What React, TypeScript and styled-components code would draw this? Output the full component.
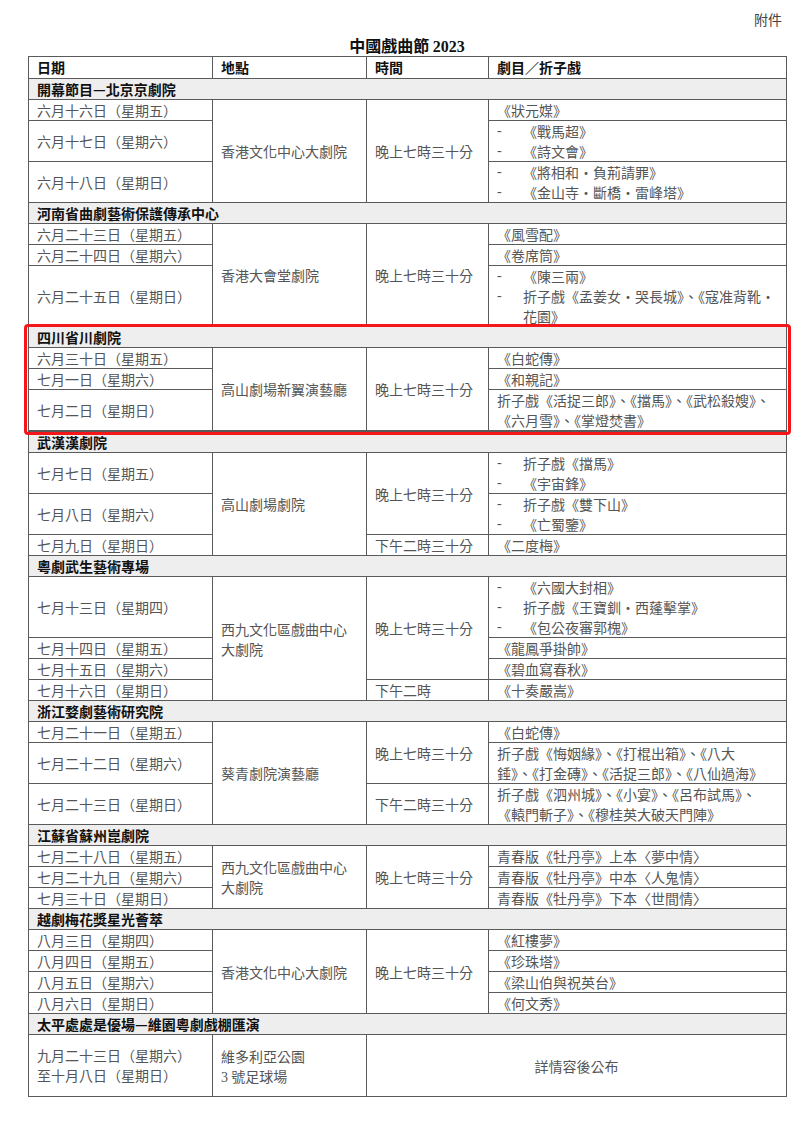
import { ReactNode } from 'react';
import styled, { createGlobalStyle, css } from 'styled-components';

const GlobalStyle = createGlobalStyle`
  html, body {
    margin: 0;
    padding: 0;
    background: #ffffff;
  }
  body {
    font-family: "Noto Sans CJK TC", "Noto Sans", sans-serif;
  }
`;

const Page = styled.div`
  width: 800px;
  min-height: 1132px;
  box-sizing: border-box;
  padding: 9px 14px 0 28px;
  background: #ffffff;
`;

const Attachment = styled.div`
  height: 20px;
  text-align: right;
  margin-right: 4px;
  font-size: 14px;
  line-height: 20px;
  color: #444444;
`;

const Title = styled.div`
  width: 758px;
  height: 20px;
  margin: 6px 0 1px;
  text-align: center;
  font-size: 16px;
  line-height: 20px;
  font-weight: 700;
  color: #111111;
`;

const Latin = styled.span`
  font-family: "Liberation Serif", "Noto Sans CJK TC", serif;
  line-height: 0;
`;

const Table = styled.table`
  width: 758px;
  border-collapse: collapse;
  table-layout: fixed;
  font-size: 14px;
  line-height: 20px;
  color: #555555;
`;

const Col = styled.col<{ $w: number }>`
  width: ${(p) => p.$w}px;
`;

const Group = styled.tbody<{ $highlight?: boolean }>`
  ${(p) =>
    p.$highlight &&
    css`
      position: relative;
      &::after {
        content: '';
        position: absolute;
        top: -3px;
        bottom: -3px;
        left: -5px;
        right: -4px;
        border: 3px solid #f5161a;
        border-radius: 4px;
        pointer-events: none;
      }
    `}
`;

const borderLine = css`
  border: 1px solid #5a5a5a;
  padding: 0 8px;
`;

const HeadCell = styled.th`
  ${borderLine};
  text-align: left;
  font-weight: 700;
  line-height: 21px;
  color: #111111;
`;

const SectionCell = styled.td`
  ${borderLine};
  background: #eeeeee;
  font-weight: 700;
  color: #111111;
`;

const Cell = styled.td<{ $center?: boolean; $tall?: boolean }>`
  ${borderLine};
  vertical-align: middle;
  text-align: ${(p) => (p.$center ? 'center' : 'left')};
  ${(p) =>
    p.$tall &&
    css`
      padding-top: 10px;
      padding-bottom: 11px;
    `}
`;

const Line = styled.div`
  height: 20px;
  white-space: nowrap;
`;

const DashItem = styled.div`
  display: flex;
`;

const Dash = styled.span`
  flex: none;
  width: 26px;
  height: 20px;
  font-family: "Liberation Serif", serif;
`;

type Span = { text: ReactNode; rows: number };

interface Row {
  date: ReactNode;
  venue?: Span;
  time?: Span;
  play: ReactNode;
  wide?: boolean;
}

interface Section {
  title: string;
  rows: Row[];
  highlight?: boolean;
}

const Dashes = ({ items }: { items: ReactNode[] }) => (
  <>
    {items.map((item, i) => (
      <DashItem key={i}>
        <Dash>-</Dash>
        <div>{item}</div>
      </DashItem>
    ))}
  </>
);

const Lines = ({ items }: { items: ReactNode[] }) => (
  <>
    {items.map((item, i) => (
      <Line key={i}>{item}</Line>
    ))}
  </>
);

const EVENING = '晚上七時三十分';

const sections: Section[] = [
  {
    title: '開幕節目—北京京劇院',
    rows: [
      {
        date: '六月十六日（星期五）',
        venue: { text: '香港文化中心大劇院', rows: 3 },
        time: { text: EVENING, rows: 3 },
        play: '《狀元媒》',
      },
      { date: '六月十七日（星期六）', play: <Dashes items={['《戰馬超》', '《詩文會》']} /> },
      {
        date: '六月十八日（星期日）',
        play: <Dashes items={['《將相和・負荊請罪》', '《金山寺・斷橋・雷峰塔》']} />,
      },
    ],
  },
  {
    title: '河南省曲劇藝術保護傳承中心',
    rows: [
      {
        date: '六月二十三日（星期五）',
        venue: { text: '香港大會堂劇院', rows: 3 },
        time: { text: EVENING, rows: 3 },
        play: '《風雪配》',
      },
      { date: '六月二十四日（星期六）', play: '《卷席筒》' },
      {
        date: '六月二十五日（星期日）',
        play: (
          <Dashes
            items={[
              '《陳三兩》',
              <Lines key="l" items={['折子戲《孟姜女・哭長城》、《寇准背靴・', '花園》']} />,
            ]}
          />
        ),
      },
    ],
  },
  {
    title: '四川省川劇院',
    highlight: true,
    rows: [
      {
        date: '六月三十日（星期五）',
        venue: { text: '高山劇場新翼演藝廳', rows: 3 },
        time: { text: EVENING, rows: 3 },
        play: '《白蛇傳》',
      },
      { date: '七月一日（星期六）', play: '《和親記》' },
      {
        date: '七月二日（星期日）',
        play: <Lines items={['折子戲《活捉三郎》、《擋馬》、《武松殺嫂》、', '《六月雪》、《掌燈焚書》']} />,
      },
    ],
  },
  {
    title: '武漢漢劇院',
    rows: [
      {
        date: '七月七日（星期五）',
        venue: { text: '高山劇場劇院', rows: 3 },
        time: { text: EVENING, rows: 2 },
        play: <Dashes items={['折子戲《擋馬》', '《宇宙鋒》']} />,
      },
      { date: '七月八日（星期六）', play: <Dashes items={['折子戲《雙下山》', '《亡蜀鑒》']} /> },
      {
        date: '七月九日（星期日）',
        time: { text: '下午二時三十分', rows: 1 },
        play: '《二度梅》',
      },
    ],
  },
  {
    title: '粵劇武生藝術專場',
    rows: [
      {
        date: '七月十三日（星期四）',
        venue: { text: '西九文化區戲曲中心大劇院', rows: 4 },
        time: { text: EVENING, rows: 3 },
        play: <Dashes items={['《六國大封相》', '折子戲《王寶釧・西蓬擊掌》', '《包公夜審郭槐》']} />,
      },
      { date: '七月十四日（星期五）', play: '《龍鳳爭掛帥》' },
      { date: '七月十五日（星期六）', play: '《碧血寫春秋》' },
      {
        date: '七月十六日（星期日）',
        time: { text: '下午二時', rows: 1 },
        play: '《十奏嚴嵩》',
      },
    ],
  },
  {
    title: '浙江婺劇藝術研究院',
    rows: [
      {
        date: '七月二十一日（星期五）',
        venue: { text: '葵青劇院演藝廳', rows: 3 },
        time: { text: EVENING, rows: 2 },
        play: '《白蛇傳》',
      },
      {
        date: '七月二十二日（星期六）',
        play: <Lines items={['折子戲《悔姻緣》、《打棍出箱》、《八大', '錘》、《打金磚》、《活捉三郎》、《八仙過海》']} />,
      },
      {
        date: '七月二十三日（星期日）',
        time: { text: '下午二時三十分', rows: 1 },
        play: <Lines items={['折子戲《泗州城》、《小宴》、《呂布試馬》、', '《轅門斬子》、《穆桂英大破天門陣》']} />,
      },
    ],
  },
  {
    title: '江蘇省蘇州崑劇院',
    rows: [
      {
        date: '七月二十八日（星期五）',
        venue: { text: '西九文化區戲曲中心大劇院', rows: 3 },
        time: { text: EVENING, rows: 3 },
        play: '青春版《牡丹亭》上本〈夢中情〉',
      },
      { date: '七月二十九日（星期六）', play: '青春版《牡丹亭》中本〈人鬼情〉' },
      { date: '七月三十日（星期日）', play: '青春版《牡丹亭》下本〈世間情〉' },
    ],
  },
  {
    title: '越劇梅花獎星光薈萃',
    rows: [
      {
        date: '八月三日（星期四）',
        venue: { text: '香港文化中心大劇院', rows: 4 },
        time: { text: EVENING, rows: 4 },
        play: '《紅樓夢》',
      },
      { date: '八月四日（星期五）', play: '《珍珠塔》' },
      { date: '八月五日（星期六）', play: '《梁山伯與祝英台》' },
      { date: '八月六日（星期日）', play: '《何文秀》' },
    ],
  },
  {
    title: '太平處處是優場—維園粵劇戲棚匯演',
    rows: [
      {
        date: <Lines items={['九月二十三日（星期六）', '至十月八日（星期日）']} />,
        venue: {
          text: <Lines items={['維多利亞公園', <><Latin>3</Latin> 號足球場</>]} />,
          rows: 1,
        },
        play: '詳情容後公布',
        wide: true,
      },
    ],
  },
];

const App = () => {
  return (
    <Page>
      <GlobalStyle />
      <Attachment>附件</Attachment>
      <Title>
        中國戲曲節 <Latin>2023</Latin>
      </Title>
      <Table>
        <colgroup>
          <Col $w={184} />
          <Col $w={154} />
          <Col $w={122} />
          <Col $w={298} />
        </colgroup>
        <thead>
          <tr>
            <HeadCell>日期</HeadCell>
            <HeadCell>地點</HeadCell>
            <HeadCell>時間</HeadCell>
            <HeadCell>劇目／折子戲</HeadCell>
          </tr>
        </thead>
        {sections.map((section) => (
          <Group key={section.title} $highlight={section.highlight}>
            <tr>
              <SectionCell colSpan={4}>{section.title}</SectionCell>
            </tr>
            {section.rows.map((row, i) => (
              <tr key={i}>
                <Cell $tall={row.wide}>{row.date}</Cell>
                {row.venue && <Cell rowSpan={row.venue.rows}>{row.venue.text}</Cell>}
                {row.time && <Cell rowSpan={row.time.rows}>{row.time.text}</Cell>}
                {row.wide ? (
                  <Cell colSpan={2} $center>
                    {row.play}
                  </Cell>
                ) : (
                  <Cell>{row.play}</Cell>
                )}
              </tr>
            ))}
          </Group>
        ))}
      </Table>
    </Page>
  );
};

export default App;
